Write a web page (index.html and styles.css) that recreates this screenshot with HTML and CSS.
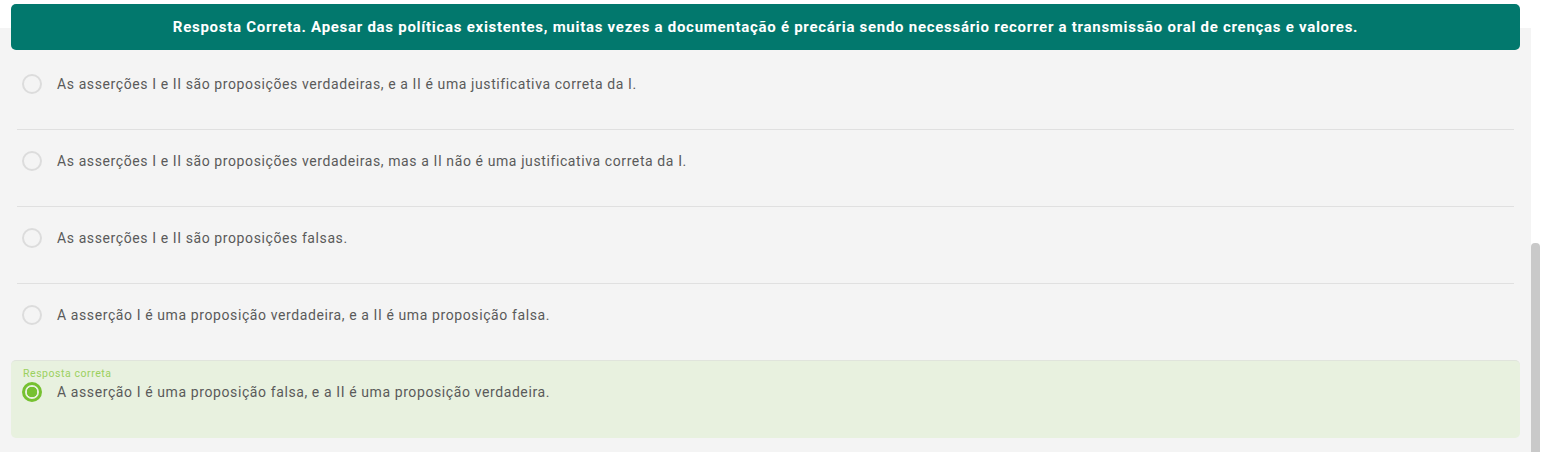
FILE: index.html
```html
<!DOCTYPE html>
<html lang="pt">
<head>
<meta charset="utf-8">
<link rel="stylesheet" href="styles.css">
</head>
<body>
<div class="page">
  <div class="main">
    <div class="banner">Resposta Correta. Apesar das políticas existentes, muitas vezes a documentação é precária sendo necessário recorrer a transmissão oral de crenças e valores.</div>
    <ul class="options">
      <li class="option"><span class="radio"></span><span class="label">As asserções I e II são proposições verdadeiras, e a II é uma justificativa correta da I.</span></li>
      <li class="option"><span class="radio"></span><span class="label">As asserções I e II são proposições verdadeiras, mas a II não é uma justificativa correta da I.</span></li>
      <li class="option"><span class="radio"></span><span class="label">As asserções I e II são proposições falsas.</span></li>
      <li class="option"><span class="radio"></span><span class="label">A asserção I é uma proposição verdadeira, e a II é uma proposição falsa.</span></li>
    </ul>
    <div class="correct">
      <div class="correct-tag">Resposta correta</div>
      <div class="correct-row"><span class="radio radio-on"></span><span class="label">A asserção I é uma proposição falsa, e a II é uma proposição verdadeira.</span></div>
    </div>
  </div>
  <div class="scrollbar"><div class="thumb"></div></div>
</div>
</body>
</html>
```

FILE: styles.css
```css
html, body {
  margin: 0;
  padding: 0;
  background: #ffffff;
}
body {
  font-family: Roboto, "Liberation Sans", Arial, sans-serif;
}
.page {
  display: flex;
  width: 1541px;
  height: 452px;
  overflow: hidden;
}
.main {
  width: 1531px;
  box-sizing: border-box;
  padding: 4px 11px 0 11px;
  background: linear-gradient(#ffffff 28px, #f4f4f4 28px);
}
.banner {
  height: 46px;
  box-sizing: border-box;
  background: #02786d;
  border-radius: 5px;
  color: #ffffff;
  font-weight: 700;
  font-size: 15px;
  letter-spacing: 0.72px;
  line-height: 46px;
  text-align: center;
}
.options {
  list-style: none;
  margin: 3px 6px 0 6px;
  padding: 0;
}
.option {
  display: flex;
  align-items: center;
  height: 77px;
  box-sizing: border-box;
  padding: 0 0 14px 5px;
  border-bottom: 1px solid #e0e0e0;
}
.option:last-child {
  border-bottom: none;
  height: 76px;
}
.radio {
  width: 20px;
  height: 20px;
  box-sizing: border-box;
  border: 2px solid #dcdcdc;
  border-radius: 50%;
  flex: none;
  margin-right: 15px;
}
.radio-on {
  border: 3px solid #76c131;
  background: radial-gradient(circle, #76c131 0 5px, #e8f1df 5.5px);
}
.label {
  font-size: 14px;
  letter-spacing: 0.6px;
  color: #5a5a5a;
  line-height: 18px;
}
.correct {
  height: 78px;
  box-sizing: border-box;
  background: #e8f1df;
  border-top: 1px solid #e0e4dc;
  border-radius: 5px;
  padding: 7px 0 0 11px;
}
.correct-tag {
  font-size: 10.5px;
  letter-spacing: 0.55px;
  line-height: 12px;
  color: #9bd05e;
  margin-left: 1px;
}
.correct-row {
  display: flex;
  align-items: center;
  height: 24px;
}
.scrollbar {
  width: 10px;
  background: #ffffff;
}
.thumb {
  margin-top: 243px;
  width: 9px;
  height: 220px;
  background: #c9c9c9;
  border-radius: 4px 4px 0 0;
}
```
